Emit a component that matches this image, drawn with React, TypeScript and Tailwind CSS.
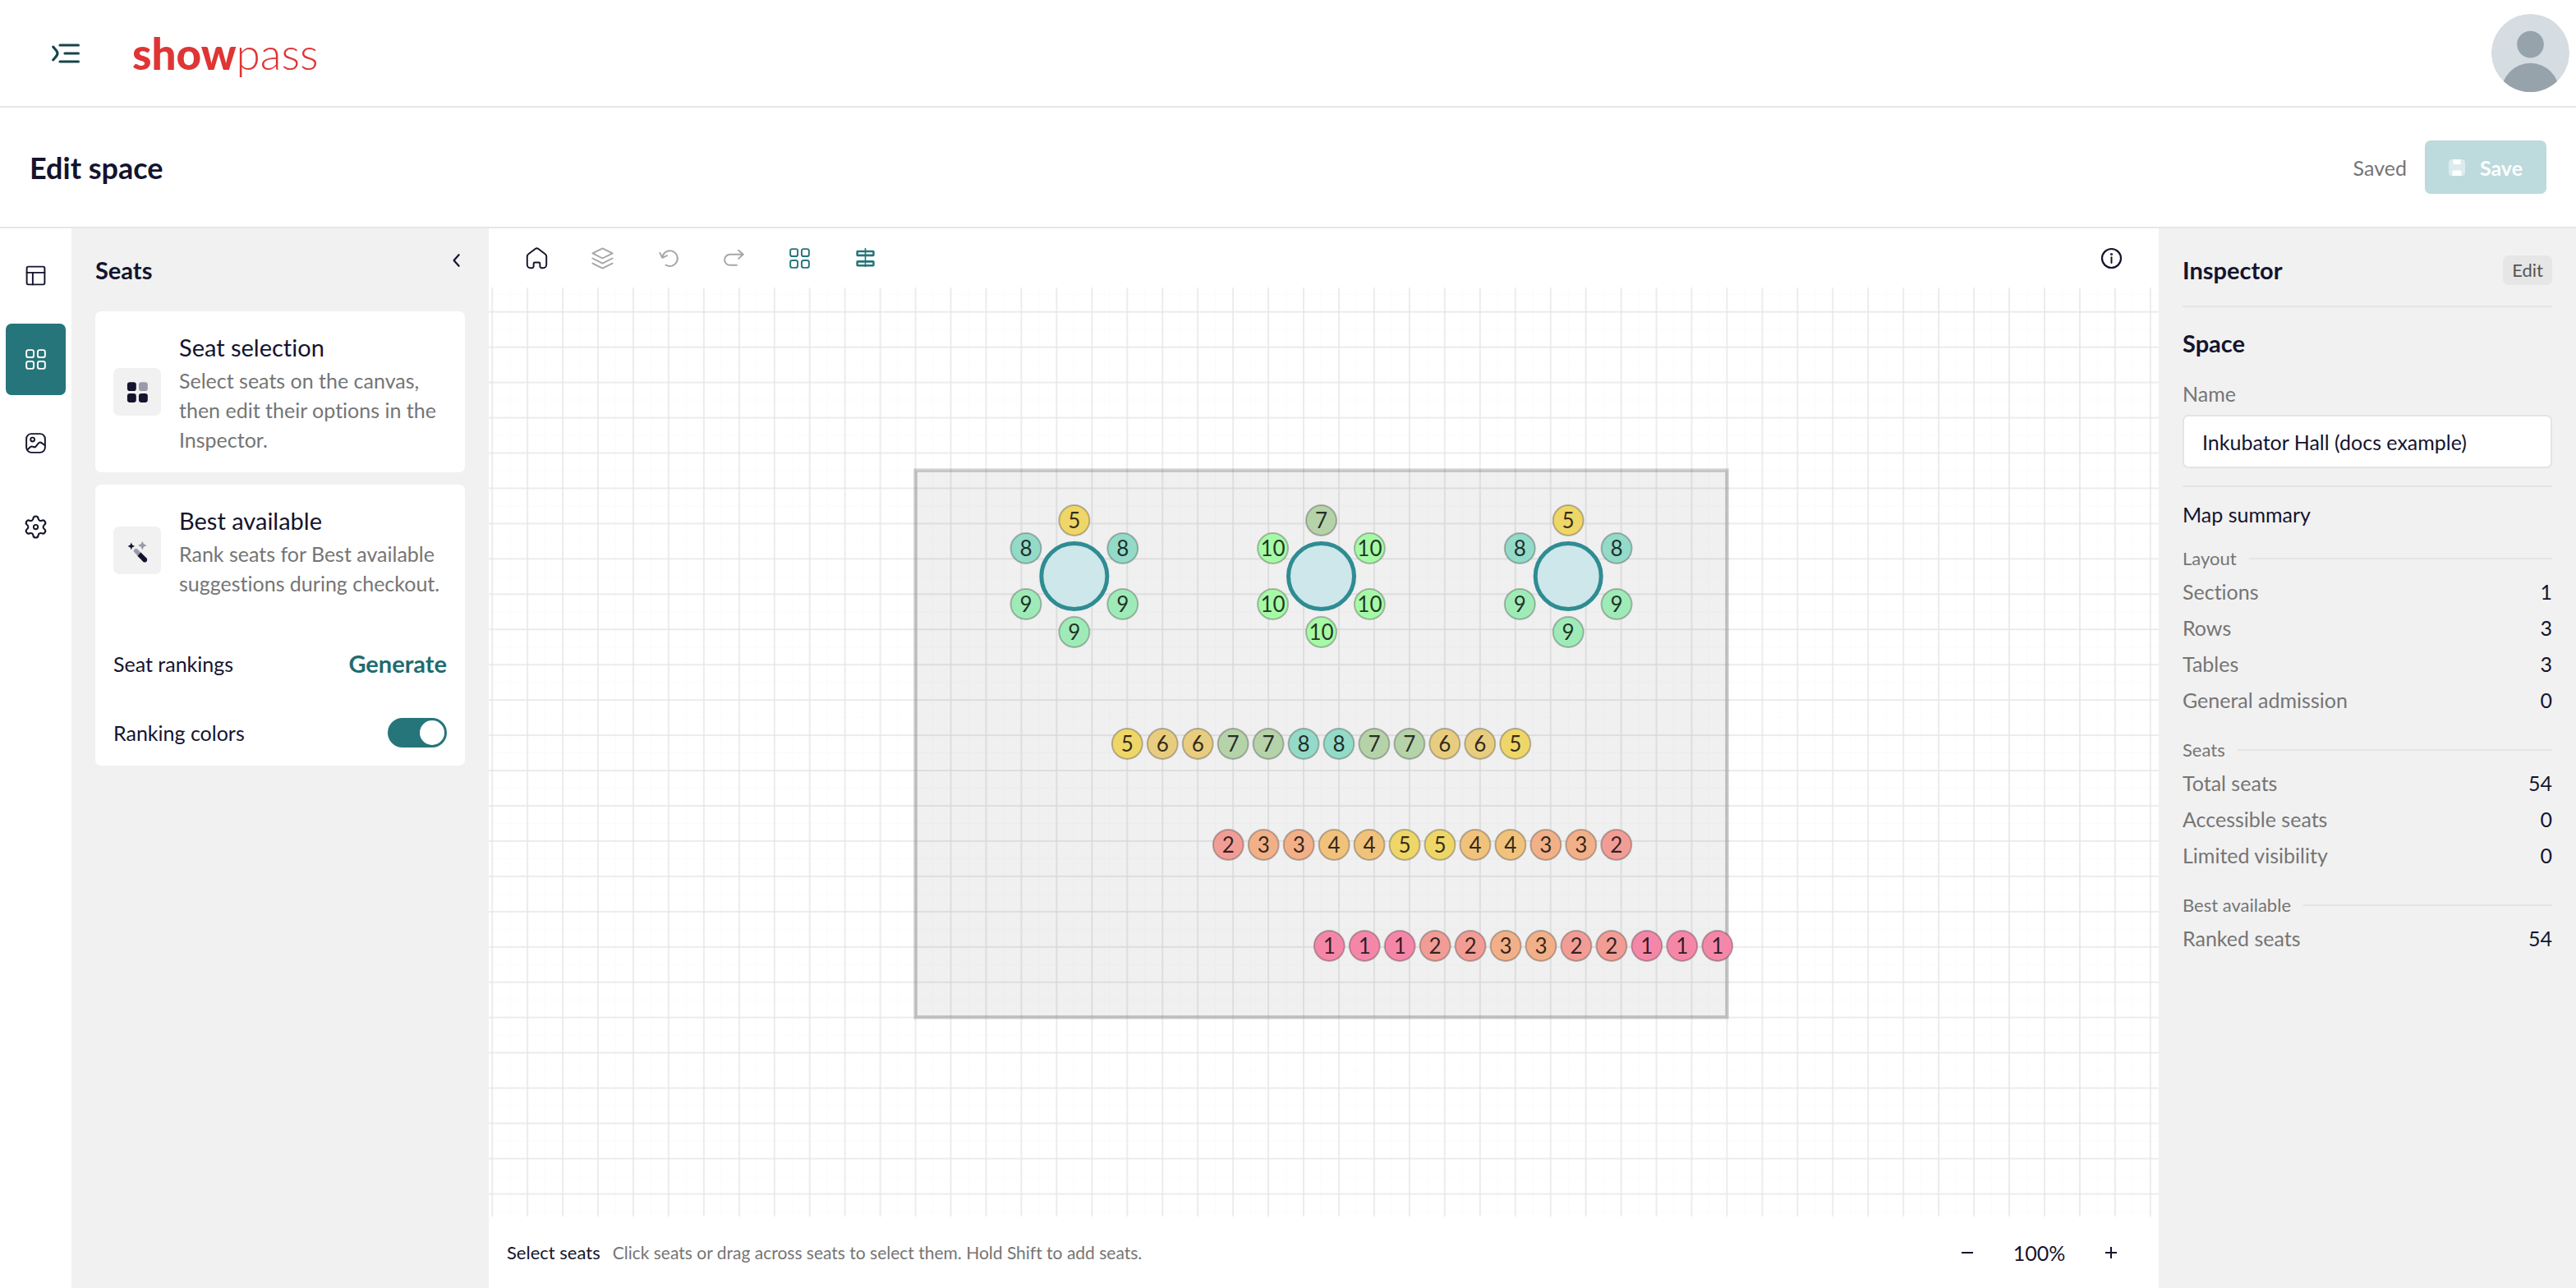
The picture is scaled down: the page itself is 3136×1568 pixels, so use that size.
import React, { useState } from 'react';

const CELL = 42.95;

const SEAT_COLORS: Record<number, string> = {
  1: '#f487a8',
  2: '#f19d96',
  3: '#f2b088',
  4: '#f0c27b',
  5: '#efd668',
  6: '#e8cd80',
  7: '#b5d2a9',
  8: '#93dac8',
  9: '#9febb8',
  10: '#a6faa6',
};

// seats go clockwise, starting at the top
const tables: { x: number; seats: number[] }[] = [
  { x: -7 * CELL, seats: [5, 8, 9, 9, 9, 8] },
  { x: 0, seats: [7, 10, 10, 10, 10, 10] },
  { x: 7 * CELL, seats: [5, 8, 9, 9, 9, 8] },
];

const rows: number[][] = [
  [5, 6, 6, 7, 7, 8, 8, 7, 7, 6, 6, 5],
  [2, 3, 3, 4, 4, 5, 5, 4, 4, 3, 3, 2],
  [1, 1, 1, 2, 2, 3, 3, 2, 2, 1, 1, 1],
];

const summary: { title: string; items: [string, number][] }[] = [
  {
    title: 'Layout',
    items: [
      ['Sections', 1],
      ['Rows', 3],
      ['Tables', 3],
      ['General admission', 0],
    ],
  },
  {
    title: 'Seats',
    items: [
      ['Total seats', 54],
      ['Accessible seats', 0],
      ['Limited visibility', 0],
    ],
  },
  { title: 'Best available', items: [['Ranked seats', 54]] },
];

// --- Icons ---

const Icon: React.FC<{ children: React.ReactNode; className?: string }> = ({ children, className = '' }) => (
  <svg
    viewBox="0 0 24 24"
    className={`size-[29px] shrink-0 ${className}`}
    fill="none"
    stroke="currentColor"
    strokeWidth="1.6"
    strokeLinecap="round"
    strokeLinejoin="round"
    aria-hidden="true"
  >
    {children}
  </svg>
);

const LayoutIcon = () => (
  <Icon>
    <rect x="3" y="3" width="18" height="18" rx="1.5" />
    <path d="M3 9h18M9 21V9" />
  </Icon>
);

const GridIcon = () => (
  <Icon>
    <rect x="2.6" y="2.6" width="7.4" height="7.4" rx="2" />
    <rect x="14" y="2.6" width="7.4" height="7.4" rx="2" />
    <rect x="2.6" y="14" width="7.4" height="7.4" rx="2" />
    <rect x="14" y="14" width="7.4" height="7.4" rx="2" />
  </Icon>
);

const ImageIcon = () => (
  <Icon>
    <rect x="2.6" y="2.6" width="18.8" height="18.8" rx="5" />
    <circle cx="8.8" cy="8.3" r="2" />
    <path d="M3.6 18.6 6.7 15.8c.8-.7 1.8-.7 2.7-.2 1.2.7 2.3.5 3-.6l2.3-2.9c.9-1.1 2-1.2 3.1-.4l3 2.2" />
  </Icon>
);

const GearIcon = () => (
  <Icon>
    <path
      transform="translate(-1 -1) scale(1.083)"
      d="M9.671 4.136a2.34 2.34 0 0 1 4.659 0 2.34 2.34 0 0 0 3.319 1.915 2.34 2.34 0 0 1 2.33 4.033 2.34 2.34 0 0 0 0 3.831 2.34 2.34 0 0 1-2.33 4.033 2.34 2.34 0 0 0-3.319 1.915 2.34 2.34 0 0 1-4.659 0 2.34 2.34 0 0 0-3.32-1.915 2.34 2.34 0 0 1-2.33-4.033 2.34 2.34 0 0 0 0-3.831A2.34 2.34 0 0 1 6.35 6.051a2.34 2.34 0 0 0 3.319-1.915"
    />
    <circle cx="12" cy="12" r="2.2" />
  </Icon>
);

const HomeIcon = () => (
  <Icon>
    <path d="M10.4 2.4 3.6 7.6A3 3 0 0 0 2.3 10v8.5a3.2 3.2 0 0 0 3.2 3.2H7a1.8 1.8 0 0 0 1.8-1.8v-2.6a1.2 1.2 0 0 1 1.2-1.2h4a1.2 1.2 0 0 1 1.2 1.2v2.6a1.8 1.8 0 0 0 1.8 1.8h1.5a3.2 3.2 0 0 0 3.2-3.2V10a3 3 0 0 0-1.3-2.4l-6.8-5.2a2.6 2.6 0 0 0-3.2 0z" />
  </Icon>
);

const LayersIcon = () => (
  <Icon>
    <path d="M12 2 22 7 12 12 2 7z" />
    <path d="m2 12 10 5 10-5M2 17l10 5 10-5" />
  </Icon>
);

const UndoIcon = () => (
  <Icon>
    <path d="M9.5 18.6A7.7 7.7 0 1 0 6 11.4M3.6 6.5 6 11.4l4.8-2.1" />
  </Icon>
);

const RedoIcon = () => (
  <Icon>
    <path d="M14.8 18.9H7.9a5.4 5.4 0 0 1 0-10.8h13.3M16.6 4l4.7 4.1-4.7 4.2" />
  </Icon>
);

const AlignIcon = () => (
  <Icon>
    <rect x="3.8" y="5" width="16.4" height="4" rx=".5" strokeWidth="2.1" />
    <rect x="3.8" y="15.2" width="16.4" height="4" rx=".5" strokeWidth="2.1" />
    <path d="M12 2.2v11.6M12 15v5" strokeWidth="1.4" />
  </Icon>
);

const InfoIcon = () => (
  <Icon>
    <circle cx="12" cy="12" r="9.5" strokeWidth="1.8" />
    <path d="M12 11v5.6" />
    <circle cx="12" cy="7.9" r=".5" />
  </Icon>
);

const SeatSelectionIcon = () => (
  <svg viewBox="0 0 24 24" className="size-[29px]" fill="#14142e" aria-hidden="true">
    <rect x="1.6" y="1.8" width="9" height="9" rx="2.6" />
    <rect x="13.2" y="1.8" width="9" height="9" rx="2.6" fill="#9a9aa8" />
    <rect x="1.6" y="13.3" width="9" height="9" rx="2.6" />
    <rect x="13.2" y="13.3" width="9" height="9" rx="2.6" />
  </svg>
);

const WandIcon = () => (
  <svg viewBox="0 0 24 24" className="size-[29px]" aria-hidden="true">
    <path d="m5.6 3.8 1.1 2.5 2.5 1.1-2.5 1.1L5.6 11 4.5 8.5 2 7.4l2.5-1.1z" fill="#14142e" />
    <path d="m16.8 2.2 1.4 3 3.1 1.4L18.2 8l-1.4 3.1L15.4 8l-3.1-1.4 3.1-1.4z" fill="#9a9aa8" />
    <path d="m10.4 12.1 8.8 9" stroke="#9a9aa8" strokeWidth="4.6" strokeLinecap="round" />
    <path d="m13.6 15.4 5.6 5.7" stroke="#14142e" strokeWidth="4.8" />
    <circle cx="19.2" cy="21.1" r="2.4" fill="#14142e" />
  </svg>
);

// --- Seat map ---

const Seat: React.FC<{ x: number; y: number; rank: number }> = ({ x, y, rank }) => (
  <g>
    <circle cx={x} cy={y} r="18.5" fill={SEAT_COLORS[rank]} stroke="#000000" strokeOpacity="0.25" strokeWidth="2" />
    <text x={x} y={y + 9} textAnchor="middle" fontSize="26" fill="#000000" fillOpacity="0.8">
      {rank}
    </text>
  </g>
);

const SeatMap = () => (
  <svg className="block size-full" role="img" aria-label="Seat map">
    <svg x="50%" y="50%" className="overflow-visible">
      <g transform="translate(-3 -10)">
        <defs>
          <pattern id="grid" x={CELL / 2} y={-10.4} width={CELL} height={CELL} patternUnits="userSpaceOnUse">
            <path d={`M${CELL / 2} 0V${CELL}M0 ${CELL / 2}H${CELL}`} stroke="#fbfbfb" />
            <path d={`M0 0V${CELL}M${CELL} 0V${CELL}M0 0H${CELL}M0 ${CELL}H${CELL}`} stroke="#e6e6e6" strokeWidth="1.5" />
          </pattern>
        </defs>
        <rect x="-3000" y="-2000" width="6000" height="4000" fill="url(#grid)" />
        <rect
          x={-11.5 * CELL}
          y={-7.75 * CELL}
          width={23 * CELL}
          height={15.5 * CELL}
          fill="#000000"
          fillOpacity="0.06"
          stroke="#000000"
          strokeOpacity="0.18"
          strokeWidth="4.5"
        />
        {tables.map((table) => (
          <g key={table.x}>
            <circle cx={table.x} cy={-204} r="40" fill="#cde7ea" stroke="#2f8c92" strokeWidth="5" />
            {table.seats.map((rank, i) => {
              const angle = (i * Math.PI) / 3;
              return <Seat key={i} x={table.x + 68 * Math.sin(angle)} y={-204 - 68 * Math.cos(angle)} rank={rank} />;
            })}
          </g>
        ))}
        {rows.map((row, r) =>
          row.map((rank, i) => <Seat key={`${r}-${i}`} x={(i - 5.5) * CELL + r * 123} y={r * 123} rank={rank} />)
        )}
      </g>
    </svg>
  </svg>
);

const railItems = [
  { label: 'Layout', icon: <LayoutIcon />, active: false },
  { label: 'Seats', icon: <GridIcon />, active: true },
  { label: 'Images', icon: <ImageIcon />, active: false },
  { label: 'Settings', icon: <GearIcon />, active: false },
];

const tools = [
  { label: 'Home', icon: <HomeIcon />, color: 'text-[#14142e]' },
  { label: 'Layers', icon: <LayersIcon />, color: 'text-[#a6a6a6]' },
  { label: 'Undo', icon: <UndoIcon />, color: 'text-[#a6a6a6]' },
  { label: 'Redo', icon: <RedoIcon />, color: 'text-[#a6a6a6]' },
  { label: 'Toggle grid', icon: <GridIcon />, color: 'text-[#26757a]' },
  { label: 'Snap to grid', icon: <AlignIcon />, color: 'text-[#26757a]' },
];

const ToolCard: React.FC<{ title: string; text: string; icon: React.ReactNode }> = ({ title, text, icon }) => (
  <button type="button" className="flex w-full items-center gap-[22px] p-[22px] text-left">
    <span className="flex size-[58px] shrink-0 items-center justify-center rounded-[7px] bg-[#f1f1f1]">{icon}</span>
    <span>
      <span className="block text-[29px] leading-[44px]">{title}</span>
      <span className="block text-[25px] leading-[36px] text-[#757575]">{text}</span>
    </span>
  </button>
);

export default function App() {
  const [name, setName] = useState('Inkubator Hall (docs example)');
  const [showColors, setShowColors] = useState(true);

  return (
    <div className="flex min-h-screen flex-col bg-white font-['Lato',sans-serif] text-[25px] leading-[36px] text-[#14142e] [font-variant-ligatures:none]">
      <header className="flex h-[131px] items-center border-b-2 border-[#e6e6e6] pr-2 pl-[63px]">
        <button type="button" aria-label="Open menu" className="text-[#17454a]">
          <svg viewBox="0 0 34 24" className="h-6 w-[34px]" fill="none" stroke="currentColor" strokeWidth="3.2" strokeLinecap="round">
            <path d="M1.8 4.2C3.4 6.6 7 8.8 7 12s-3.6 5.4-5.2 7.8" />
            <path d="M10 2h22.4M16 12h16.4M10 22h22.4" />
          </svg>
        </button>
        <a href="#" className="ml-16 text-[53px] leading-[60px] text-[#df3535]">
          <span className="font-black">show</span>
          <span className="font-light">pass</span>
        </a>
        <button type="button" aria-label="Account" className="ml-auto size-[95px] overflow-hidden rounded-full">
          <svg viewBox="0 0 96 96" className="size-full">
            <circle cx="48" cy="48" r="48" fill="#d5dce2" />
            <circle cx="48" cy="37.5" r="16.5" fill="#97a3ab" />
            <circle cx="48" cy="96" r="35.5" fill="#97a3ab" />
          </svg>
        </button>
      </header>

      <div className="flex h-[147px] items-center border-b-2 border-[#e6e6e6] px-9">
        <h1 className="text-[36px] leading-[44px] font-bold">Edit space</h1>
        <span className="ml-auto text-[#757575]">Saved</span>
        <button
          type="button"
          disabled
          className="ml-[22px] flex h-[65px] items-center gap-[18px] rounded-[7px] bg-[#bddadd] px-[29px] font-bold text-white"
        >
          <svg viewBox="0 0 20 20" className="size-5" aria-hidden="true">
            <rect width="20" height="20" rx="4" fill="#dcebed" />
            <path d="M5.5 0h9v5a1 1 0 0 1-1 1h-7a1 1 0 0 1-1-1z" fill="#fff" />
            <path d="M4.5 20v-5A1.5 1.5 0 0 1 6 13.5h8a1.5 1.5 0 0 1 1.5 1.5v5z" fill="#fff" />
          </svg>
          Save
        </button>
      </div>

      <div className="flex flex-1">
        <nav className="flex w-[87px] shrink-0 flex-col gap-[15px] px-[7px] pt-[14px]">
          {railItems.map((item) => (
            <button
              key={item.label}
              type="button"
              aria-label={item.label}
              className={`flex h-[87px] items-center justify-center rounded-[7px] ${item.active ? 'bg-[#26757a] text-white' : ''}`}
            >
              {item.icon}
            </button>
          ))}
        </nav>

        <aside className="w-[508px] shrink-0 bg-[#f1f1f1] p-[29px]">
          <div className="mb-[29px] flex items-start justify-between">
            <h2 className="text-[29px] leading-[43px] font-bold">Seats</h2>
            <button type="button" aria-label="Collapse panel">
              <svg viewBox="0 0 20 20" className="size-5" fill="none" stroke="currentColor" strokeWidth="2.2" strokeLinecap="round" strokeLinejoin="round">
                <path d="m12.6 3.2-6 6.8 6 6.8" />
              </svg>
            </button>
          </div>
          <div className="flex flex-col gap-[15px]">
            <section className="rounded-[7px] bg-white">
              <ToolCard
                title="Seat selection"
                text="Select seats on the canvas, then edit their options in the Inspector."
                icon={<SeatSelectionIcon />}
              />
            </section>
            <section className="rounded-[7px] bg-white">
              <ToolCard
                title="Best available"
                text="Rank seats for Best available suggestions during checkout."
                icon={<WandIcon />}
              />
              <div className="flex flex-col gap-[30px] p-[22px]">
                <div className="flex h-[72px] items-center justify-between">
                  <span>Seat rankings</span>
                  <button type="button" className="text-[29px] font-bold text-[#1e6c70]">
                    Generate
                  </button>
                </div>
                <label className="flex items-center justify-between">
                  <span>Ranking colors</span>
                  <input
                    type="checkbox"
                    role="switch"
                    className="peer sr-only"
                    checked={showColors}
                    onChange={(e) => setShowColors(e.target.checked)}
                  />
                  <span className="flex h-9 w-[72px] rounded-full bg-[#b5b5b5] p-[3px] peer-checked:justify-end peer-checked:bg-[#26757a]">
                    <span className="size-[30px] rounded-full bg-white" />
                  </span>
                </label>
              </div>
            </section>
          </div>
        </aside>

        <main className="flex min-w-0 flex-1 flex-col">
          <div className="flex h-[72px] items-center gap-[22px] px-[29px]">
            {tools.map((tool) => (
              <button
                key={tool.label}
                type="button"
                aria-label={tool.label}
                className={`flex size-[58px] items-center justify-center ${tool.color}`}
              >
                {tool.icon}
              </button>
            ))}
            <button type="button" aria-label="Help" className="ml-auto flex size-[58px] items-center justify-center">
              <InfoIcon />
            </button>
          </div>
          <div className="min-h-0 flex-1 basis-0 overflow-hidden">
            <SeatMap />
          </div>
          <footer className="flex h-[87px] items-center pr-[29px] pl-[22px]">
            <p className="flex items-baseline gap-[15px]">
              <span className="text-[22px]">Select seats</span>
              <span className="text-[21px] text-[#757575]">
                Click seats or drag across seats to select them. Hold Shift to add seats.
              </span>
            </p>
            <div className="ml-auto flex items-center">
              <button type="button" aria-label="Zoom out" className="flex size-[58px] items-center justify-center">
                <svg viewBox="0 0 16 16" className="size-4" stroke="currentColor" strokeWidth="2">
                  <path d="M1 8h14" />
                </svg>
              </button>
              <span className="w-[117px] text-center">100%</span>
              <button type="button" aria-label="Zoom in" className="flex size-[58px] items-center justify-center">
                <svg viewBox="0 0 16 16" className="size-4" stroke="currentColor" strokeWidth="2">
                  <path d="M1 8h14M8 1v14" />
                </svg>
              </button>
            </div>
          </footer>
        </main>

        <aside className="w-[508px] shrink-0 bg-[#f1f1f1] p-[29px]">
          <div className="flex items-center justify-between border-b-2 border-[#e4e4e4] pb-[22px]">
            <h2 className="text-[29px] leading-[43px] font-bold">Inspector</h2>
            <button type="button" className="rounded-[7px] bg-[#e6e6e6] px-[11px] text-[22px] text-[#555555]">
              Edit
            </button>
          </div>
          <h3 className="mt-[22px] text-[29px] leading-[43px] font-bold">Space</h3>
          <label htmlFor="space-name" className="mt-[22px] block text-[#757575]">
            Name
          </label>
          <input
            id="space-name"
            type="text"
            value={name}
            onChange={(e) => setName(e.target.value)}
            className="mt-2 block h-[65px] w-full rounded-[7px] border-2 border-[#e4e4e4] bg-white px-[22px]"
          />
          <h4 className="mt-[21px] border-t-2 border-[#e4e4e4] pt-[15px]">Map summary</h4>
          <div className="mt-5 flex flex-col gap-[27px]">
            {summary.map((group) => (
              <section key={group.title}>
                <h5 className="mb-[6px] flex items-center gap-[15px] text-[22px] leading-[32px] text-[#757575]">
                  {group.title}
                  <span className="h-[2px] flex-1 bg-[#e4e4e4]" />
                </h5>
                <dl className="flex flex-col gap-2">
                  {group.items.map(([label, value]) => (
                    <div key={label} className="flex justify-between">
                      <dt className="text-[#757575]">{label}</dt>
                      <dd>{value}</dd>
                    </div>
                  ))}
                </dl>
              </section>
            ))}
          </div>
        </aside>
      </div>
    </div>
  );
}
